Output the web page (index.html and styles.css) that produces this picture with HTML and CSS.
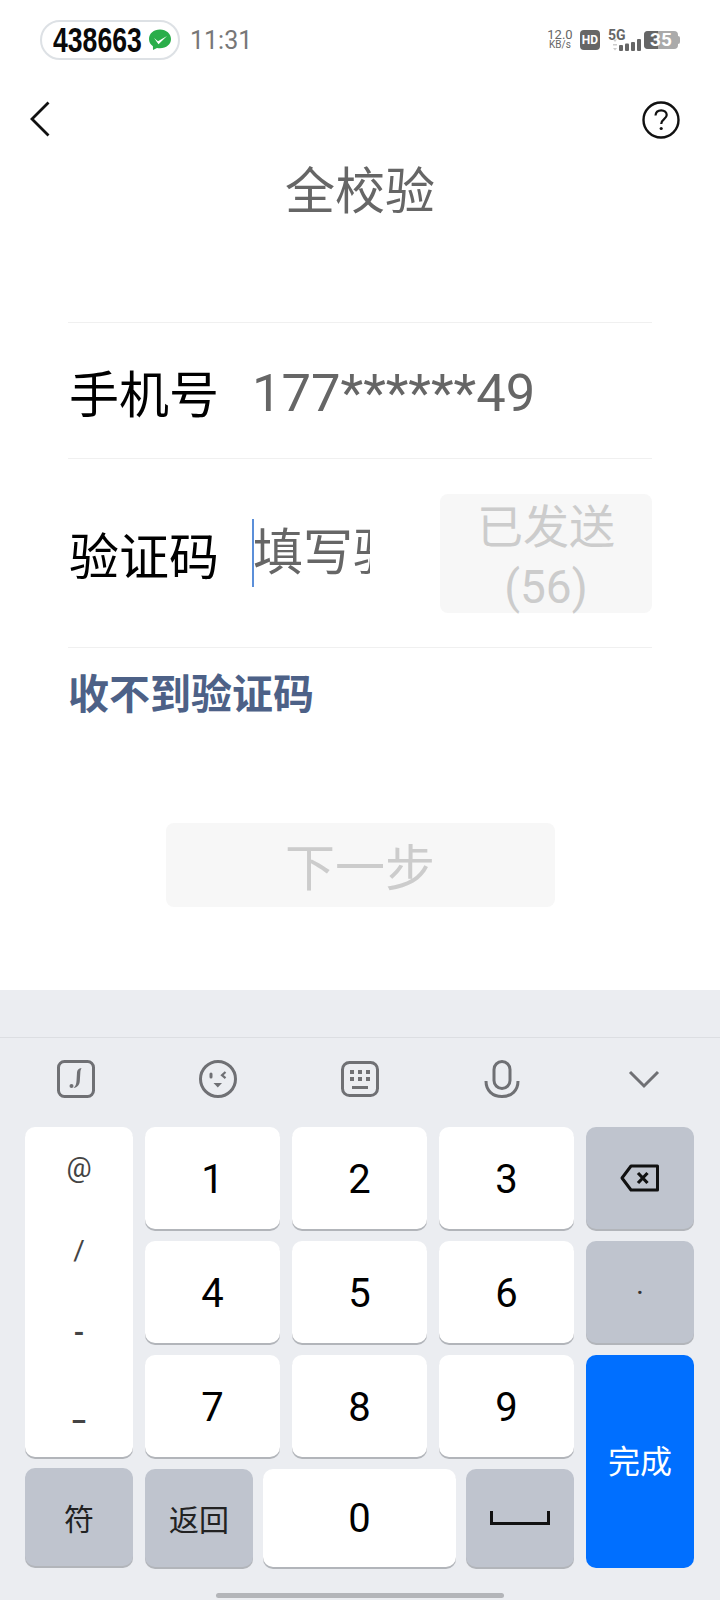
FILE: index.html
```html
<!DOCTYPE html>
<html>
<head>
    <meta charset="utf-8">
    <title>全校验</title>
    <link rel="stylesheet" href="styles.css">
</head>
<body>
<div class="screen">
    <div class="status-bar">
        <div class="status-left">
            <div class="code-pill">
                <span class="code-text">438663</span>
                <svg class="wechat-icon" viewBox="0 0 24 22">
                    <path d="M12 0.500C5.600 0.500 1 4.600 1 10c0 3 1.500 5.600 3.900 7.300L5 21l4-2.100c1 .2 2 .3 3 .3 6.400 0 11-4 11-9.200S18.400.5 12 .5z" fill="#2aae4a"></path>
                    <path d="M6 9l4 3.200 9-5.200-8.500 8.200z" fill="#fff"></path>
                </svg>
            </div>
            <span class="clock">11:31</span>
        </div>
        <div class="status-right">
            <div class="net-speed">
                <div class="net-value">12.0</div>
                <div class="net-unit">KB/s</div>
            </div>
            <div class="hd-badge">HD</div>
            <div class="signal">
                <span class="signal-label">5G</span>
                <svg class="signal-bars" viewBox="0 0 30 12">
                    <path d="M1 0.500h4l-2 2.500zM1 5h4v1.500h-4zM1 9h4l-2 2.500z" fill="#ccc"></path>
                    <rect x="7" y="6" width="4" height="6" rx="1" fill="#666"></rect>
                    <rect x="13" y="4.500" width="4" height="7.500" rx="1" fill="#666"></rect>
                    <rect x="19" y="3" width="4" height="9" rx="1" fill="#666"></rect>
                    <rect x="25" y="0" width="4" height="12" rx="1" fill="#666"></rect>
                </svg>
            </div>
            <div class="battery">
                <div class="battery-fill"></div>
                <span class="battery-text">35</span>
            </div>
        </div>
    </div>

    <div class="main">
        <div class="nav-row">
            <svg class="back-icon" viewBox="0 0 20 36">
                <path d="M18.500 1.500L2 18l16.500 16.500" fill="none" stroke="#111" stroke-width="2.800"></path>
            </svg>
            <svg class="help-icon" viewBox="0 0 38 38">
                <circle cx="19" cy="19" r="17.500" fill="none" stroke="#111" stroke-width="2.400"></circle>
                <path d="M13.500 14.500c.3-3.500 2.600-5.200 5.700-5.200 3.200 0 5.500 2 5.500 4.800 0 4-5.500 4.300-5.500 8.900" fill="none" stroke="#111" stroke-width="2.200"></path>
                <circle cx="19.200" cy="27.500" r="1.600" fill="#111"></circle>
            </svg>
        </div>
        <div class="page-title">全校验</div>

        <div class="form">
            <div class="form-row phone-row">
                <div class="form-label">手机号</div>
                <div class="phone-value">177******49</div>
            </div>
            <div class="form-row code-row">
                <div class="form-label">验证码</div>
                <div class="code-input">填写验证码</div>
                <div class="send-button">已发送<br>(56)</div>
            </div>
            <div class="help-link">收不到验证码</div>
        </div>

        <div class="next-button">下一步</div>
    </div>

    <div class="keyboard">
        <div class="kb-top"></div>
        <div class="kb-toolbar">
            <svg class="tool-icon" viewBox="0 0 38 38">
                <rect x="1.500" y="1.500" width="35" height="35" rx="6" fill="none" stroke="#6f7074" stroke-width="3"></rect>
                <path d="M24.500 8c-3 .4-4.300 1.800-4.500 4.500l-.5 8.500c-.2 3-.8 5-3 7 4-.6 6-3 6.300-7l.5-8c.1-2 .4-3.500 1.200-5z" fill="#6f7074"></path>
                <circle cx="14.500" cy="26" r="2" fill="#6f7074"></circle>
            </svg>
            <svg class="tool-icon" viewBox="0 0 38 38">
                <circle cx="19" cy="19" r="17.500" fill="none" stroke="#6f7074" stroke-width="3"></circle>
                <rect x="10.500" y="12.500" width="3" height="6" rx="1.500" fill="#6f7074"></rect>
                <path d="M26.500 12l-3.500 3.200 3.500 3" fill="none" stroke="#6f7074" stroke-width="2.200"></path>
                <path d="M14.500 23h8.500l-4.200 4.500z" fill="#6f7074"></path>
            </svg>
            <svg class="tool-icon" viewBox="0 0 38 38">
                <rect x="1.500" y="2.500" width="35" height="33" rx="7" fill="none" stroke="#6f7074" stroke-width="3"></rect>
                <path d="M9 10h4v4h-4zM17 10h4v4h-4zM25 10h4v4h-4zM9 17h4v4h-4zM17 17h4v4h-4zM25 17h4v4h-4zM11 26h16v3h-16z" fill="#6f7074"></path>
            </svg>
            <svg class="tool-icon" viewBox="0 0 38 38">
                <rect x="11" y="1.500" width="16" height="27" rx="8" fill="none" stroke="#6f7074" stroke-width="3"></rect>
                <path d="M3 21c0 9.500 6.500 15.500 16 15.500s16-6 16-15.500" fill="none" stroke="#6f7074" stroke-width="3"></path>
            </svg>
            <svg class="tool-icon" viewBox="0 0 38 38">
                <path d="M5 12l14 14 14-14" fill="none" stroke="#6f7074" stroke-width="3"></path>
            </svg>
        </div>

        <div class="keypad">
            <div class="side-col">
                <div class="key symbol-key">
                    <span class="sym-at">@</span>
                    <span class="sym-slash">/</span>
                    <span class="sym-dash">-</span>
                    <span class="sym-under">_</span>
                </div>
                <div class="key gray-key bottom-key small-label">符</div>
            </div>
            <div class="mid-col">
                <div class="digit-grid">
                    <div class="key">1</div>
                    <div class="key">2</div>
                    <div class="key">3</div>
                    <div class="key">4</div>
                    <div class="key">5</div>
                    <div class="key">6</div>
                    <div class="key">7</div>
                    <div class="key">8</div>
                    <div class="key">9</div>
                </div>
                <div class="bottom-row">
                    <div class="key gray-key bottom-key small-label">返回</div>
                    <div class="key bottom-key zero-key">0</div>
                    <div class="key gray-key bottom-key">
                        <svg class="space-icon" viewBox="0 0 60 14">
                            <path d="M1.500 0v12.500h57V0" fill="none" stroke="#111" stroke-width="3"></path>
                        </svg>
                    </div>
                </div>
            </div>
            <div class="side-col right-col">
                <div class="key gray-key action-key">
                    <svg class="delete-icon" viewBox="0 0 40 28">
                        <path d="M11 2h26.500v24H11L2 14z" fill="none" stroke="#111" stroke-width="3" stroke-linejoin="round"></path>
                        <path d="M18 9l9.500 10M27.500 9L18 19" fill="none" stroke="#111" stroke-width="3.200"></path>
                    </svg>
                </div>
                <div class="key gray-key action-key dot-key">·</div>
                <div class="key done-key">完成</div>
            </div>
        </div>
        <div class="home-bar"></div>
    </div>
</div>
</body>
</html>
```
FILE: styles.css
```css
body {
    margin: 0;
    background-color: white;
    font-family: Roboto, "Noto Sans CJK SC", sans-serif;
}

.screen {
    width: 720px;
    height: 1600px;
    overflow: hidden;
    display: flex;
    flex-direction: column;
}

/* Status bar */
.status-bar {
    height: 80px;
    display: flex;
    justify-content: space-between;
    align-items: center;
    padding: 0 42px 0 40px;
    box-sizing: border-box;
    flex-shrink: 0;
}

.status-left {
    display: flex;
    align-items: center;
    gap: 10px;
}

.code-pill {
    width: 140px;
    height: 40px;
    box-sizing: border-box;
    border: 2px solid #dde1e5;
    border-radius: 20px;
    display: flex;
    align-items: center;
    gap: 7px;
    padding-left: 11px;
}

.code-text {
    width: 88px;
    flex-shrink: 0;
    font-family: "Liberation Sans", sans-serif;
    font-size: 35px;
    font-weight: 700;
    color: #0a0a0a;
    white-space: nowrap;
    transform: scaleX(0.76);
    transform-origin: left center;
}

.wechat-icon {
    width: 24px;
    height: 22px;
    flex-shrink: 0;
}

.clock {
    font-size: 25px;
    color: #777;
}

.status-right {
    display: flex;
    align-items: center;
}

.net-speed {
    width: 26px;
    text-align: center;
    color: #666;
    line-height: 10px;
    margin-right: 7px;
}

.net-value {
    font-size: 13px;
}

.net-unit {
    font-size: 10px;
}

.hd-badge {
    width: 20px;
    height: 20px;
    background-color: #666;
    border-radius: 4px;
    color: white;
    font-size: 12px;
    font-weight: 700;
    line-height: 20px;
    text-align: center;
    margin-right: 8px;
}

.signal {
    width: 30px;
    height: 21px;
    position: relative;
    margin-right: 6px;
}

.signal-label {
    font-size: 14px;
    font-weight: 700;
    color: #666;
    line-height: 11px;
    display: block;
}

.signal-bars {
    position: absolute;
    left: 4px;
    bottom: 0;
    width: 30px;
    height: 12px;
}

.battery {
    width: 34px;
    height: 18px;
    background-color: #aaa;
    border-radius: 4px;
    position: relative;
}

.battery::after {
    content: "";
    position: absolute;
    top: 5px;
    right: -2px;
    width: 2px;
    height: 8px;
    background-color: #aaa;
    border-radius: 0 2px 2px 0;
}

.battery-fill {
    width: 14px;
    height: 100%;
    background-color: #666;
    border-radius: 4px 0 0 4px;
}

.battery-text {
    position: absolute;
    top: 0;
    left: 0;
    width: 34px;
    text-align: center;
    font-size: 19px;
    font-weight: 700;
    line-height: 18px;
    color: white;
}

/* Page */
.main {
    height: 910px;
    flex-shrink: 0;
}

.nav-row {
    display: flex;
    justify-content: space-between;
    padding: 21px 40px 0 30px;
    height: 36px;
}

.back-icon {
    width: 20px;
    height: 36px;
}

.help-icon {
    width: 38px;
    height: 38px;
}

.page-title {
    font-size: 50px;
    line-height: 60px;
    color: #666;
    text-align: center;
    margin-top: 25px;
}

.form {
    margin: 100px 68px 0;
}

.form-row {
    border-top: 1px solid #f0f0f0;
    display: flex;
    align-items: center;
    box-sizing: border-box;
}

.phone-row {
    height: 136px;
}

.code-row {
    height: 190px;
    border-bottom: 1px solid #f0f0f0;
}

.form-label {
    font-size: 50px;
    color: #000;
    width: 184px;
    flex-shrink: 0;
    padding-left: 1px;
    box-sizing: border-box;
}

.phone-value {
    font-size: 52.5px;
    color: #666;
    padding-top: 4px;
}

.code-input {
    width: 118px;
    height: 68px;
    line-height: 68px;
    font-size: 50px;
    text-indent: -1px;
    color: #666;
    white-space: nowrap;
    overflow: hidden;
    border-left: 2px solid #5b8fd9;
    margin-right: 70px;
}

.send-button {
    width: 212px;
    height: 119px;
    box-sizing: border-box;
    padding-top: 3px;
    flex-shrink: 0;
    background-color: #f7f7f7;
    border-radius: 8px;
    color: #ccc;
    font-size: 46px;
    line-height: 60px;
    text-align: center;
}

.help-link {
    font-size: 41px;
    font-weight: 700;
    color: #4d6187;
    line-height: 56px;
    padding: 19px 0 0 0;
}

.next-button {
    width: 389px;
    height: 84px;
    margin: 100px auto 0;
    background-color: #f7f7f7;
    border-radius: 8px;
    color: #ccc;
    font-size: 50px;
    line-height: 92px;
    text-align: center;
}

/* Keyboard */
.keyboard {
    flex: 1;
    background-color: #ebedf1;
}

.kb-top {
    height: 47px;
    border-bottom: 1px solid #dcdee2;
}

.kb-toolbar {
    height: 82px;
    display: flex;
    justify-content: space-between;
    align-items: center;
    padding: 0 57px 7px 57px;
}

.tool-icon {
    width: 38px;
    height: 38px;
}

.keypad {
    display: flex;
    gap: 12px;
    padding: 0 26px 0 25px;
}

.side-col {
    width: 108px;
    display: flex;
    flex-direction: column;
    gap: 11px;
    flex-shrink: 0;
}

.right-col {
    gap: 12px;
}

.mid-col {
    width: 429px;
    display: flex;
    flex-direction: column;
    gap: 12px;
}

.digit-grid {
    display: grid;
    grid-template-columns: repeat(3, 1fr);
    grid-auto-rows: 102px;
    gap: 12px;
}

.key {
    background-color: white;
    border-radius: 10px;
    box-shadow: 0 2px 0 #b2b5ba;
    display: flex;
    align-items: center;
    justify-content: center;
    font-size: 40px;
    color: #000;
}

.digit-grid .key {
    box-sizing: border-box;
    padding-top: 2px;
}

.gray-key {
    background-color: #bfc4ce;
}

.symbol-key {
    height: 330px;
    flex-direction: column;
    justify-content: flex-start;
    font-size: 28px;
    color: #444;
}

.symbol-key span {
    height: 83px;
    line-height: 82px;
}

.sym-at {
    line-height: 80px;
}

.sym-dash {
    font-weight: 700;
}

.symbol-key .sym-under {
    font-weight: 700;
    line-height: 72px;
}

.bottom-row {
    display: flex;
    gap: 10px;
}

.bottom-key {
    height: 98px;
    width: 108px;
    flex-shrink: 0;
}

.zero-key {
    width: 193px;
}

.small-label {
    font-size: 30px;
    color: #222;
}

.action-key {
    height: 102px;
}

.dot-key {
    font-size: 30px;
    color: #333;
}

.done-key {
    height: 213px;
    box-sizing: border-box;
    padding-bottom: 6px;
    background-color: #006fff;
    color: white;
    font-size: 32px;
    box-shadow: none;
}

.delete-icon {
    width: 40px;
    height: 28px;
}

.space-icon {
    width: 60px;
    height: 14px;
}

.home-bar {
    width: 288px;
    height: 5px;
    background-color: #b3b5b9;
    border-radius: 3px;
    margin: 25px auto 0;
}
```
